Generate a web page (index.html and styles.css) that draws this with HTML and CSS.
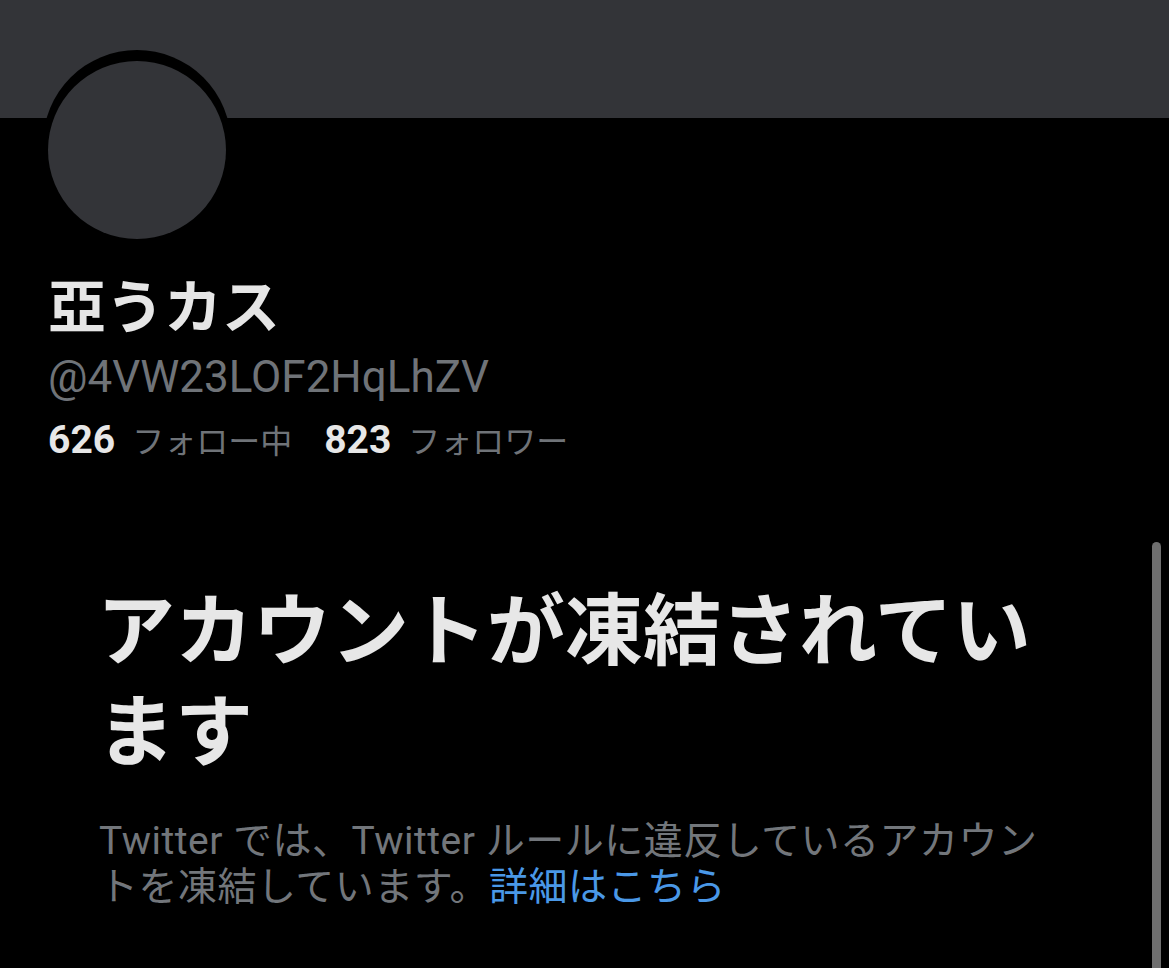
FILE: index.html
```html
<!DOCTYPE html>
<html lang="ja">
<head>
<meta charset="utf-8">
<title>亞うカス (@4VW23LOF2HqLhZV)</title>
<link rel="stylesheet" href="styles.css">
</head>
<body>
<div class="banner"></div>
<main class="profile">
  <div class="avatar-ring"><div class="avatar"></div></div>
  <h1 class="name">亞うカス</h1>
  <div class="handle">@4VW23LOF2HqLhZV</div>
  <div class="stats">
    <span class="stat"><b class="num">626</b><span class="label">フォロー中</span></span>
    <span class="stat"><b class="num">823</b><span class="label">フォロワー</span></span>
  </div>
  <section class="suspended">
    <h2 class="title">アカウントが凍結されています</h2>
    <p class="desc">Twitter では、Twitter ルールに違反しているアカウントを凍結しています。<a class="link" href="#">詳細はこちら</a></p>
  </section>
</main>
<div class="scrollbar"></div>
</body>
</html>
```
FILE: styles.css
```css
html, body {
  margin: 0;
  padding: 0;
  background: #000;
  overflow: hidden;
}
body {
  width: 1169px;
  height: 968px;
  position: relative;
  font-family: Roboto, "Noto Sans CJK JP", sans-serif;
  color: #e7e7e7;
}
.banner {
  height: 118px;
  background: #333438;
}
.profile {
  padding-left: 48px;
}
.avatar-ring {
  width: 188px;
  border-radius: 94px;
  background: #000;
  margin-top: -68px;
  margin-left: -5px;
  padding: 11px 0 0 5px;
  box-sizing: border-box;
  position: relative;
}
.avatar {
  width: 178px;
  height: 178px;
  border-radius: 50%;
  background: #333438;
}
.name {
  margin: 35px 0 0;
  font-family: "Noto Sans CJK JP", sans-serif;
  font-weight: 700;
  font-size: 58px;
  line-height: 58px;
  color: #e6e6e6;
}
.handle {
  margin-top: 20px;
  font-size: 44px;
  line-height: 50px;
  color: #6f7378;
}
.stats {
  margin-top: 14px;
  display: flex;
  gap: 32px;
  line-height: 46px;
}
.stat {
  display: flex;
  align-items: baseline;
  gap: 17px;
}
.num {
  font-weight: 700;
  font-size: 39px;
  color: #e7e7e7;
}
.label {
  font-family: "Noto Sans CJK JP", sans-serif;
  font-size: 32px;
  color: #6f7378;
}
.suspended {
  margin-left: 49px;
  width: 952px;
}
.title {
  margin: 112px 0 0;
  font-family: "Noto Sans CJK JP", sans-serif;
  font-weight: 700;
  font-size: 78px;
  line-height: 101px;
  color: #e7e7e7;
}
.desc {
  margin: 41px 0 0 2px;
  font-size: 39px;
  line-height: 46px;
  letter-spacing: 0.5px;
  color: #72767b;
}
.link {
  color: #4a98e7;
  text-decoration: none;
}
.scrollbar {
  position: absolute;
  left: 1152px;
  top: 542px;
  width: 9px;
  height: 440px;
  border-radius: 5px;
  background: #6f6f6f;
}
```
